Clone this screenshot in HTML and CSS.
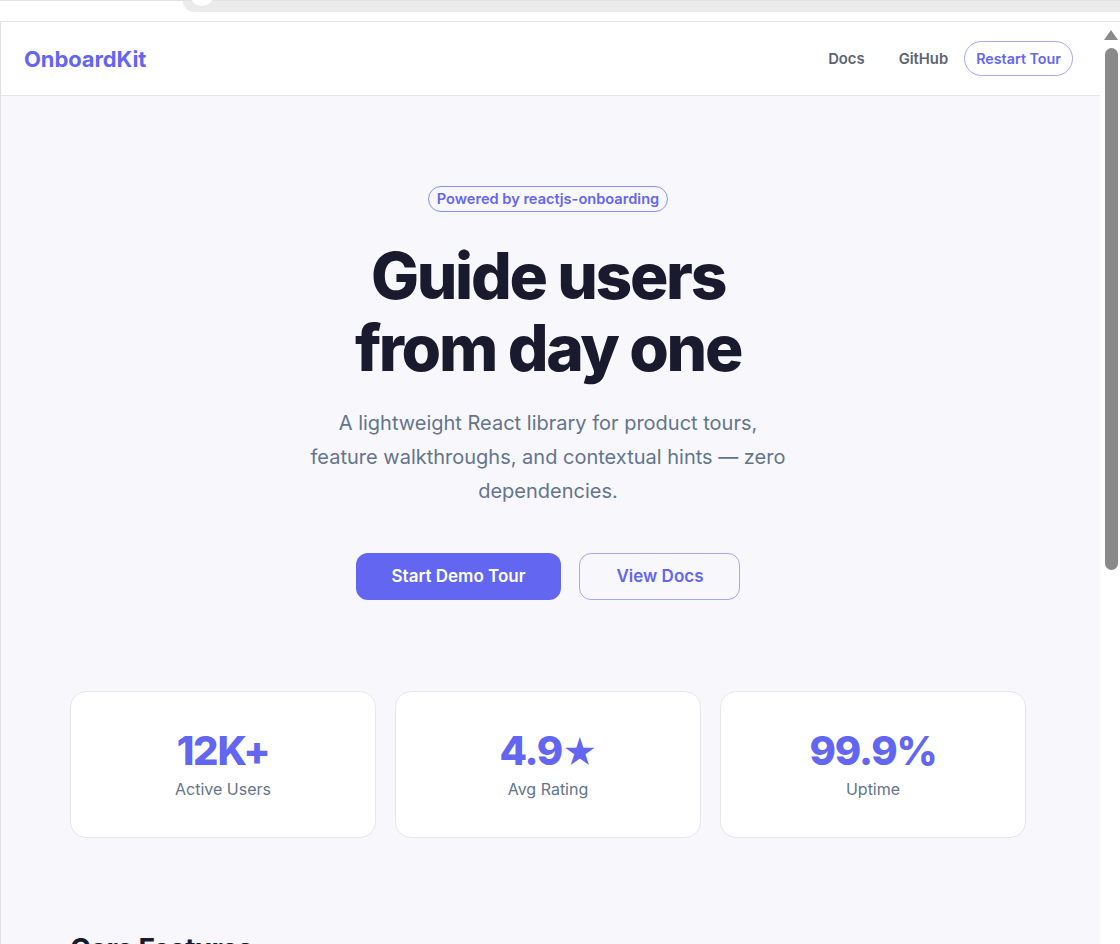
FILE: index.html
```html
<!DOCTYPE html>
<html>
	<head>
		<meta charset="utf-8">
		<title>OnboardKit</title>
		<link rel="stylesheet" href="styles.css">
	</head>
	<body>
		<div class="chrome">
			<div class="chrome-tab"></div>
		</div>
		<div class="window">
			<div class="page">
				<header class="topbar">
					<a class="logo" href="#">OnboardKit</a>
					<nav class="nav">
						<a class="nav-link" href="#">Docs</a>
						<a class="nav-link" href="#">GitHub</a>
						<button class="nav-btn">Restart Tour</button>
					</nav>
				</header>

				<main class="main">
					<section class="hero">
						<span class="badge">Powered by reactjs-onboarding</span>
						<h1 class="hero-title">Guide users<br>from day one</h1>
						<p class="hero-sub">A lightweight React library for product tours, feature walkthroughs, and contextual hints — zero dependencies.</p>
						<div class="hero-actions">
							<button class="btn btn-primary">Start Demo Tour</button>
							<button class="btn btn-outline">View Docs</button>
						</div>
					</section>

					<section class="stats">
						<div class="stat">
							<div class="stat-num">12K+</div>
							<div class="stat-label">Active Users</div>
						</div>
						<div class="stat">
							<div class="stat-num">4.9<span class="star">★</span></div>
							<div class="stat-label">Avg Rating</div>
						</div>
						<div class="stat">
							<div class="stat-num">99.9%</div>
							<div class="stat-label">Uptime</div>
						</div>
					</section>

					<section class="features">
						<h2 class="section-title">Core Features</h2>
					</section>
				</main>
			</div>
			<div class="scrollbar">
				<span class="scroll-arrow"></span>
				<span class="scroll-thumb"></span>
			</div>
		</div>
	</body>
</html>
```

FILE: styles.css
```css
* {
	margin: 0;
	padding: 0;
	box-sizing: border-box;
}
html, body {
	height: 944px;
	overflow: hidden;
}
body {
	font-family: Inter, "Noto Sans", sans-serif;
	background: #fff;
	color: #1a1a2e;
}
a {
	text-decoration: none;
}
button {
	font-family: inherit;
	cursor: pointer;
}

/* fake browser chrome */
.chrome {
	height: 21px;
	border-top: 1px solid #e3e3e3;
	background: #fff;
	position: relative;
}
.chrome-tab {
	position: absolute;
	left: 183px;
	right: 0;
	top: 0;
	height: 11px;
	background: #ebebeb;
	border-bottom-left-radius: 12px;
}
.chrome-tab::before {
	content: "";
	position: absolute;
	left: 8px;
	top: -14px;
	width: 22px;
	height: 19px;
	border-radius: 50%;
	background: #fff;
}
.window {
	display: flex;
	height: 923px;
	border-top: 1px solid #e4e4e7;
}
.page {
	flex: 1;
	background: #f8f8fc;
	border-left: 1px solid #e0e0e4;
	overflow: hidden;
}
.scrollbar {
	width: 20px;
	background: #fff;
	display: flex;
	flex-direction: column;
	align-items: center;
	padding-top: 8px;
	gap: 8px;
}
.scroll-arrow {
	width: 0;
	height: 0;
	border-left: 7px solid transparent;
	border-right: 7px solid transparent;
	border-bottom: 10px solid #8a8a8a;
	margin-left: 2px;
}
.scroll-thumb {
	width: 13px;
	height: 522px;
	border-radius: 7px;
	background: #8a8a8a;
	margin-left: 2px;
}

/* header */
.topbar {
	height: 74px;
	background: #fff;
	border-bottom: 1px solid #e5e7eb;
	display: flex;
	align-items: center;
	justify-content: space-between;
	padding: 0 27px 0 23px;
}
.logo {
	font-size: 22px;
	font-weight: 700;
	color: #6366f1;
	letter-spacing: -0.005em;
}
.nav {
	display: flex;
	align-items: center;
}
.nav-link {
	font-size: 14.8px;
	font-weight: 600;
	color: #5b6475;
	margin-right: 34px;
}
.nav-link:nth-child(2) {
	margin-right: 16px;
}
.nav-btn {
	font-size: 14.3px;
	font-weight: 600;
	color: #6366f1;
	background: transparent;
	border: 1px solid #a5a7f7;
	border-radius: 999px;
	padding: 7px 11px;
	line-height: 19px;
}

/* hero */
.main {
	padding-right: 5px;
}
.hero {
	display: flex;
	flex-direction: column;
	align-items: center;
	text-align: center;
	padding-top: 90px;
}
.badge {
	font-size: 14.6px;
	font-weight: 600;
	line-height: 18px;
	color: #6366f1;
	border: 1px solid #8b8ef5;
	border-radius: 999px;
	padding: 3px 8px;
}
.hero-title {
	margin-top: 28px;
	font-size: 64px;
	line-height: 72px;
	font-weight: 800;
	letter-spacing: -0.036em;
	color: #1a1a2e;
}
.hero-sub {
	margin-top: 22px;
	max-width: 480px;
	font-size: 20px;
	line-height: 34px;
	color: #64748b;
}
.hero-actions {
	display: flex;
	gap: 18px;
	margin-top: 45px;
}
.btn {
	font-size: 17px;
	font-weight: 600;
	line-height: 19px;
	border-radius: 12px;
	padding: 14px 36px;
}
.btn-primary {
	background: #6366f1;
	color: #fff;
	border: 0;
}
.btn-outline {
	background: transparent;
	color: #6366f1;
	border: 1px solid #a5a7f7;
	padding: 13px 36px;
}

/* stats */
.stats {
	width: 956px;
	margin: 91px auto 0;
	display: grid;
	grid-template-columns: repeat(3, 1fr);
	gap: 19px;
}
.stat {
	height: 147px;
	background: #fff;
	border: 1px solid #e5e7eb;
	border-radius: 16px;
	display: flex;
	flex-direction: column;
	align-items: center;
	justify-content: center;
	padding-bottom: 2px;
}
.stat-num {
	font-size: 40px;
	line-height: 48px;
	height: 48px;
	font-weight: 800;
	letter-spacing: -0.03em;
	color: #6366f1;
}
.star {
	font-size: 34px;
}
.stat-label {
	margin-top: 3px;
	font-size: 16px;
	line-height: 22px;
	color: #64748b;
}

/* features */
.features {
	width: 956px;
	margin: 94px auto 0;
}
.section-title {
	font-size: 28px;
	font-weight: 700;
	letter-spacing: -0.025em;
	color: #1a1a2e;
}
```
